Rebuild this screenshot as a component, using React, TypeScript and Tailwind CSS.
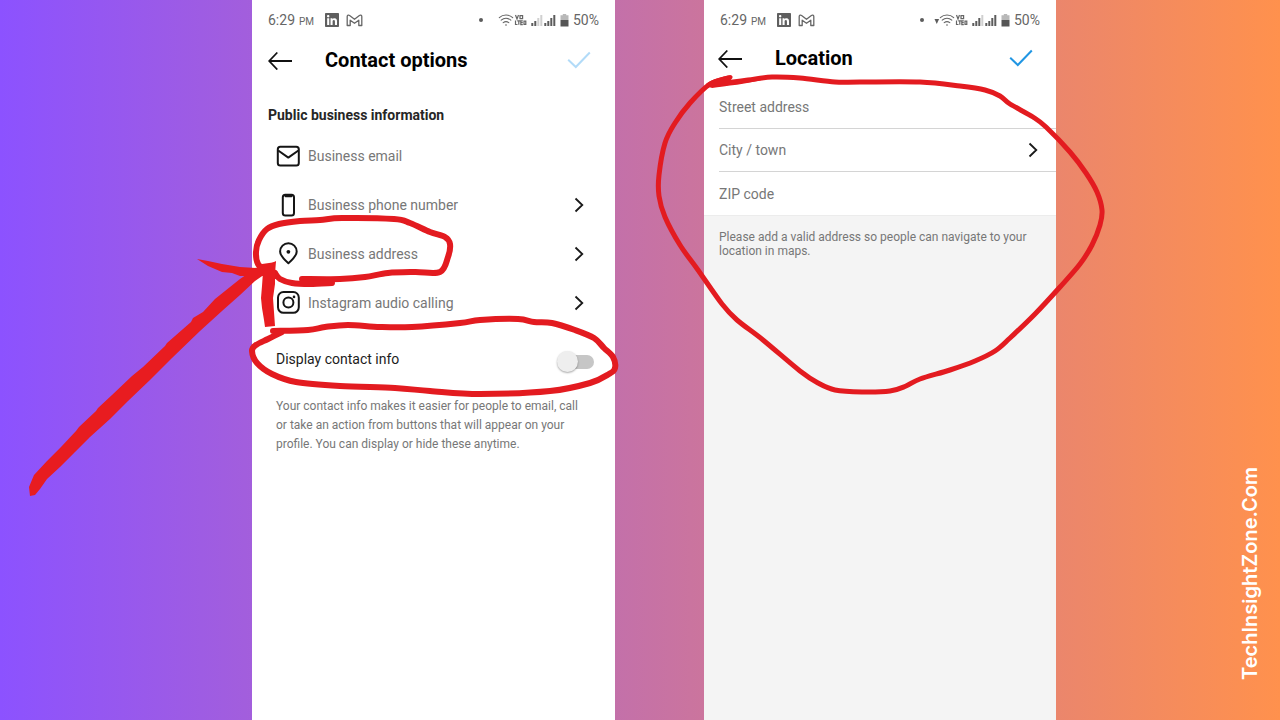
import type { ReactNode } from "react";
import { FaLinkedin } from "react-icons/fa";

type Point = [number, number];

/* Catmull-Rom curve through a list of points, as an SVG path. */
function smooth(points: Point[]): string {
  let d = `M${points[0][0]} ${points[0][1]}`;
  for (let i = 0; i < points.length - 1; i++) {
    const a = points[Math.max(i - 1, 0)];
    const b = points[i];
    const c = points[i + 1];
    const e = points[Math.min(i + 2, points.length - 1)];
    d += `C${b[0] + (c[0] - a[0]) / 6} ${b[1] + (c[1] - a[1]) / 6} ${c[0] - (e[0] - b[0]) / 6} ${c[1] - (e[1] - b[1]) / 6} ${c[0]} ${c[1]}`;
  }
  return d;
}

const addressLoop: Point[] = [
  [276, 276], [267, 272], [258, 264], [256, 252], [259, 240], [267, 229], [279, 224],
  [300, 221], [320, 220], [342, 218], [394, 219], [410, 223], [430, 232], [445, 237],
  [450, 244], [448, 257], [440, 272], [415, 272], [388, 273], [365, 277], [340, 279], [302, 279],
];

const addressTail: Point[] = [[275, 273], [280, 279], [292, 283], [310, 284], [332, 283]];

const displayLoop: Point[] = [
  [273, 331], [308, 330], [325, 327], [348, 325], [380, 327], [412, 327], [460, 323],
  [480, 320], [518, 319], [534, 322], [552, 323], [575, 330], [594, 338], [604, 348],
  [613, 357], [615, 368], [609, 374], [590, 383], [550, 391], [480, 394], [430, 391],
  [395, 388], [340, 386], [296, 382], [272, 374], [257, 363], [252, 351], [256, 345],
  [268, 339], [282, 332],
];

const locationLoop: Point[] = [
  [728, 78], [710, 84], [690, 103], [675, 123], [665, 143], [659, 175], [659, 196],
  [665, 217], [680, 245], [698, 270], [722, 304], [737, 320], [763, 340], [800, 371],
  [818, 383], [835, 390], [862, 392], [890, 391], [906, 386], [920, 379], [950, 370],
  [975, 361], [995, 351], [1010, 338], [1035, 314], [1060, 287], [1080, 264], [1092, 245],
  [1100, 225], [1102, 210], [1097, 192], [1086, 173], [1070, 152], [1046, 127], [1033, 117],
  [1010, 104], [1000, 96], [985, 90], [960, 86], [920, 82], [860, 82], [835, 82],
  [800, 78], [772, 77], [748, 80], [725, 83], [710, 85],
];

function Stroke({ points, width }: { points: Point[]; width: number }) {
  return (
    <path
      d={smooth(points)}
      fill="none"
      stroke="#e31b20"
      strokeWidth={width}
      strokeLinecap="round"
      strokeLinejoin="round"
    />
  );
}

function SignalIcon({ level }: { level: number }) {
  const bars = [
    [0, 9, 3],
    [3, 7, 5],
    [6, 4, 8],
    [9, 1, 11],
  ];
  return (
    <svg width="12" height="13" viewBox="0 0 12 13" aria-hidden="true">
      {bars.map(([x, y, h], i) => (
        <rect key={x} x={x + 0.3} y={y} width="2" height={h} fill={i < level ? "#5c5c5c" : "#d0d0d0"} />
      ))}
    </svg>
  );
}

function StatusBar({ level, dataArrow }: { level: number; dataArrow?: boolean }) {
  return (
    <div className="flex h-10 items-center justify-between px-4 text-sm text-[#666]">
      <div className="flex items-center">
        <span>6:29</span>
        <span className="ml-1 pt-1 text-[10px] leading-3">PM</span>
        <FaLinkedin className="ml-2.5 size-4 text-[#5f5f5f]" aria-hidden="true" />
        <svg className="ml-1.5" width="17" height="13" viewBox="0 0 17 13" fill="none" stroke="#666" strokeWidth="1.3" strokeLinejoin="round" aria-hidden="true">
          <path d="M1.200 11.500V2.600C1.200 1 2.700 .8 3.600 1.500L8.500 5.300 13.400 1.500C14.300 .8 15.800 1 15.800 2.600V11.500H12.800V6.200L8.500 9.300 4.200 6.200V11.500Z" />
        </svg>
      </div>
      <div className="flex items-center">
        <svg width="30" height="14" viewBox="0 0 30 14" aria-hidden="true">
          <circle cx="7" cy="7" r="2" fill="#5c5c5c" />
          {dataArrow && <path d="M19.500 6h4.600l-2.300 5z" fill="#5c5c5c" />}
        </svg>
        <svg className="-ml-1.5" width="16" height="14" viewBox="0 0 16 14" fill="none" stroke="#666" strokeWidth="1.1" strokeLinecap="round" aria-hidden="true">
          <path d="M1.300 4.600C5 1.200 11 1.200 14.700 4.600M3.200 7.200C6 4.800 10 4.800 12.800 7.200M5.200 9.600C7 8.300 9 8.300 10.800 9.600" />
          <circle cx="8" cy="12" r=".8" fill="#5c5c5c" stroke="none" />
        </svg>
        <svg width="13" height="12" viewBox="0 0 13 12" fill="none" stroke="#666" strokeWidth="1.2" aria-hidden="true">
          <path d="M1.500 1l1.500 4L4.500 1M6 1.600h2.600v3H6zM1.500 6.500v4h2M3.300 6.800h3M4.800 6.800v4M8.800 6.800H6.800v3.800h2M6.800 8.700h2M10 7.200h1.800v3.200H10z" />
        </svg>
        <span className="ml-1 flex gap-px">
          <SignalIcon level={level} />
          <SignalIcon level={4} />
        </span>
        <svg className="ml-1" width="9" height="13" viewBox="0 0 9 13" aria-hidden="true">
          <path d="M2.800 0h3.400v1.300H8.500V6H.5V1.300H2.800z" fill="#b8b8b8" />
          <path d="M.5 6h8v6.500h-8z" fill="#555" />
        </svg>
        <span className="ml-1">50%</span>
      </div>
    </div>
  );
}

function BackButton() {
  return (
    <button type="button" aria-label="Back" className="flex w-[57px] shrink-0">
      <svg width="26" height="20" viewBox="0 0 26 20" fill="none" stroke="#111" strokeWidth="1.8" aria-hidden="true">
        <path d="M24 11H1.500M9.300 2.500L1.200 11 9.300 19.500" />
      </svg>
    </button>
  );
}

function ConfirmButton({ color }: { color: string }) {
  return (
    <button type="button" aria-label="Save" className="ml-auto">
      <svg width="24" height="20" viewBox="0 0 24 20" fill="none" stroke={color} strokeWidth="2" aria-hidden="true">
        <path d="M1.200 9.800L8.800 17 22.800 2.500" />
      </svg>
    </button>
  );
}

function Chevron() {
  return (
    <svg className="ml-auto" width="24" height="24" viewBox="0 0 24 24" fill="none" stroke="#1a1a1a" strokeWidth="1.8" aria-hidden="true">
      <path d="M8.500 5.500L15.300 12 8.500 18.500" />
    </svg>
  );
}

function LineIcon({ children }: { children: ReactNode }) {
  return (
    <svg className="shrink-0" width="24" height="24" viewBox="0 0 24 24" fill="none" stroke="#151515" strokeWidth="2" strokeLinejoin="round" aria-hidden="true">
      {children}
    </svg>
  );
}

const rowClass = "flex h-[49px] w-full items-center gap-2 text-left text-[#777]";

function OptionRow({ icon, label }: { icon: ReactNode; label: string }) {
  return (
    <button type="button" className={rowClass}>
      <LineIcon>{icon}</LineIcon>
      <span>{label}</span>
      <Chevron />
    </button>
  );
}

function ContactOptions() {
  return (
    <main className="relative col-start-2 bg-white">
      <StatusBar level={2} />
      <header className="flex h-10 items-center pr-6 pl-4">
        <BackButton />
        <h1 className="text-xl font-bold text-black">Contact options</h1>
        <ConfirmButton color="#b2dbf8" />
      </header>
      <h2 className="mt-6 pl-4 text-sm leading-[22px] font-bold text-[#262626]">Public business information</h2>
      <div className="mt-[5px] px-6 text-sm">
        <label className={rowClass}>
          <LineIcon>
            <rect x="1.8" y="2.8" width="21" height="18.8" rx="2.5" />
            <path d="M2.200 6.500L12.300 13.600 22.400 6.500" />
          </LineIcon>
          <input
            type="email"
            aria-label="Business email"
            placeholder="Business email"
            className="min-w-0 flex-1 bg-transparent outline-none placeholder:text-[#777]"
          />
        </label>
        <OptionRow
          label="Business phone number"
          icon={
            <>
              <rect x="6.800" y="1.800" width="11.200" height="20.600" rx="2.500" />
              <path d="M9.500 2h6v1.200h-6z" />
            </>
          }
        />
        <OptionRow
          label="Business address"
          icon={
            <>
              <path d="M12.400 21.300C8.500 17.800 4.100 13.600 4.100 9.500a8.300 8.300 0 0 1 16.600 0C20.700 13.600 16.300 17.800 12.400 21.300Z" />
              <circle cx="12.400" cy="9.800" r="1.900" fill="#151515" stroke="none" />
            </>
          }
        />
        <OptionRow
          label="Instagram audio calling"
          icon={
            <>
              <rect x="2" y="1" width="20.800" height="20.800" rx="5.500" />
              <circle cx="12.400" cy="11.400" r="5" />
              <circle cx="18" cy="5.900" r="1.300" fill="#151515" stroke="none" />
            </>
          }
        />
      </div>
      <label className="mt-2 flex h-12 items-center justify-between pr-[21px] pl-6 text-sm text-[#1c1c1c]">
        <span>Display contact info</span>
        <input
          type="checkbox"
          role="switch"
          className="relative mt-1.5 h-3.5 w-[30px] appearance-none rounded-full bg-[#c6c6c6] before:absolute before:-top-1 before:-left-[7px] before:size-[21px] before:rounded-full before:bg-[#eeeeee] before:shadow-[0_1px_2px_rgba(0,0,0,0.35)] checked:bg-[#9fd0f5] checked:before:left-4"
        />
      </label>
      <p className="mt-3.5 pr-7 pl-6 text-xs leading-[19px] text-[#777]">
        Your contact info makes it easier for people to email, call or take an action from buttons that will appear on
        your profile. You can display or hide these anytime.
      </p>
      <svg
        className="pointer-events-none absolute top-0 left-0 overflow-visible"
        width="363"
        height="720"
        viewBox="252 0 363 720"
        aria-hidden="true"
      >
        <Stroke points={addressLoop} width={6} />
        <Stroke points={addressTail} width={6} />
        <Stroke points={displayLoop} width={6} />
        <g fill="#e81c20">
          <path d="M29 487L34 475 47 461 61 447 76 431 79 427 96 411 98 408 112 395 132 376 143 367 165 346 167 343 191 322 193 318 203 312 215 299 240 279 262 264 276 262 268 272 255 281 240 295 222 311 200 331 172 358 150 380 128 401 110 419 90 437 75 452 60 467 47 479 40 489 35 495 30 496Z" />
          <path d="M197 259L208 261 222 264 240 267 258 268 268 265 276 261 275 274 264 276 240 276 232 273 222 272 208 266Z" />
          <path d="M263 272L275 262 275 284 273 298 274 312 275 326 265 327 264 320 262 308 261 298 262 286Z" />
        </g>
      </svg>
    </main>
  );
}

const fieldClass =
  "block h-[43px] w-full border-b border-[#d4d4d4] bg-transparent text-sm text-[#777] outline-none placeholder:text-[#777]";

function Location() {
  return (
    <section className="relative col-start-4 flex flex-col bg-[#f4f4f4]">
      <div className="bg-white">
        <StatusBar level={3} dataArrow />
        <header className="flex h-9 items-center pr-[23px] pl-[14px]">
          <BackButton />
          <h1 className="text-xl leading-6 font-bold text-black">Location</h1>
          <ConfirmButton color="#2196e3" />
        </header>
        <div className="mt-2.5 border-b border-[#ececec] pl-[15px]">
          <input aria-label="Street address" placeholder="Street address" className={fieldClass} />
          <button type="button" className="flex h-[43px] w-full items-center border-b border-[#d4d4d4] pr-[11px] text-left text-sm text-[#777]">
            <span>City / town</span>
            <Chevron />
          </button>
          <input
            aria-label="ZIP code"
            placeholder="ZIP code"
            className="block h-[43px] w-full bg-transparent text-sm text-[#777] outline-none placeholder:text-[#777]"
          />
        </div>
      </div>
      <p className="mt-3.5 pr-7 pl-[15px] text-xs leading-[14px] text-[#777]">
        Please add a valid address so people can navigate to your location in maps.
      </p>
      <svg
        className="pointer-events-none absolute top-0 left-0 overflow-visible"
        width="352"
        height="720"
        viewBox="704 0 352 720"
        aria-hidden="true"
      >
        <Stroke points={locationLoop} width={5} />
        <path d="M706 84C712 79 722 77 730 75 735 76 732 80 728 82 750 79 765 77 765 79 750 84 725 86 712 88Z" fill="#e31b20" />
      </svg>
    </section>
  );
}

export default function App() {
  return (
    <div className="grid min-h-screen grid-cols-[252fr_363fr_89fr_352fr_224fr] overflow-hidden bg-linear-to-r/srgb from-[#8c52ff] to-[#ff914d] font-['Roboto',sans-serif]">
      <ContactOptions />
      <Location />
      <aside className="col-start-5 flex items-end justify-end pr-4 pb-10">
        <p className="rotate-180 font-['Inter',sans-serif] text-xl font-semibold text-white [writing-mode:vertical-rl]">
          TechInsightZone.Com
        </p>
      </aside>
    </div>
  );
}
